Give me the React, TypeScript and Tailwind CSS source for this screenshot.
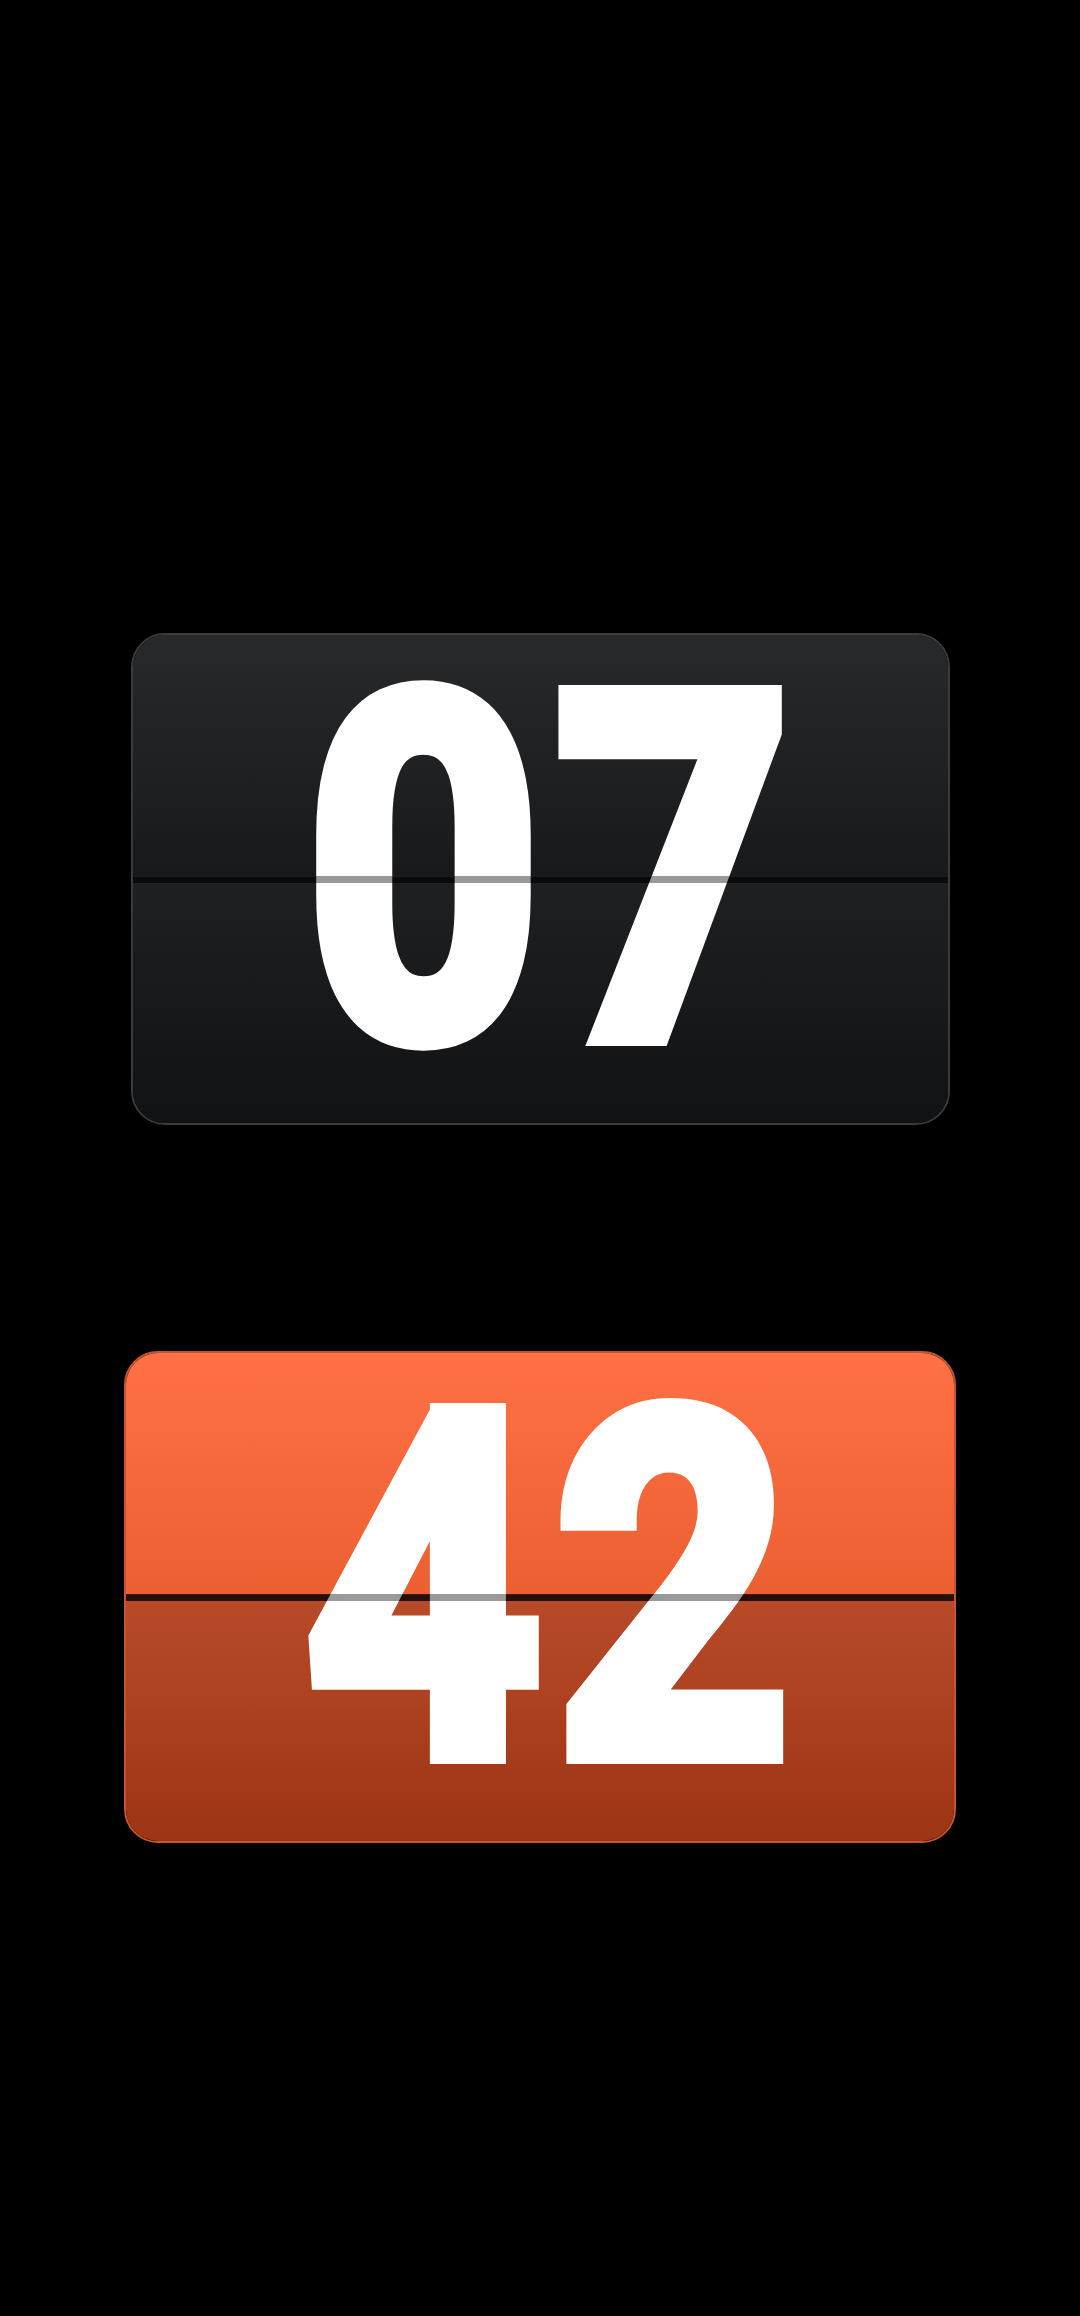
import React from 'react';

interface FlipCardProps {
  value: string;
  widthClass: string;
  topHalf: string;
  bottomHalf: string;
  borderClass: string;
  seamClass: string;
}

function FlipCard({ value, widthClass, topHalf, bottomHalf, borderClass, seamClass }: FlipCardProps) {
  return (
    <div className={`relative h-[492px] ${widthClass} mx-auto rounded-[34px] border-2 ${borderClass}`}>
      {/* halves */}
      <div className="flex flex-col h-full rounded-[32px] overflow-hidden">
        <div className={`flex-1 ${topHalf}`} />
        <div className={`flex-1 ${bottomHalf}`} />
      </div>

      {/* seam under the digits */}
      <div className={`absolute left-0 right-0 top-[241px] h-[7px] ${seamClass}`} />

      {/* digits */}
      <div className="absolute inset-0 flex items-center justify-center pb-[14px] pl-[32px]">
        <span
          className="text-white font-bold leading-[0.9] text-[477px] scale-x-[0.854] tracking-[0.038em] [-webkit-text-stroke:22px_white] select-none"
          style={{ fontFamily: 'Roboto, "Liberation Sans", sans-serif' }}
        >
          {value}
        </span>
      </div>

      {/* seam shade over the digits */}
      <div className="absolute left-0 right-0 top-[241px] h-[7px] bg-black/40" />
    </div>
  );
}

export default function App() {
  return (
    <div className="min-h-[2316px] w-full bg-black pt-[633px]">
      <FlipCard
        value="07"
        widthClass="w-[819px]"
        topHalf="bg-gradient-to-b from-[#28292b] to-[#18191b]"
        bottomHalf="bg-gradient-to-b from-[#1f2022] to-[#111214]"
        borderClass="border-[#3a3b3d]"
        seamClass="bg-[#121213] border-t border-[#2e2f31]"
      />
      <div className="h-[226px]" />
      <FlipCard
        value="42"
        widthClass="w-[832px]"
        topHalf="bg-gradient-to-b from-[#ff7145] to-[#ec5f31]"
        bottomHalf="bg-gradient-to-b from-[#b84a28] to-[#9d3414]"
        borderClass="border-[#c4552e]"
        seamClass="bg-[#3e1a0f] border-t border-[#6a2a16]"
      />
    </div>
  );
}
